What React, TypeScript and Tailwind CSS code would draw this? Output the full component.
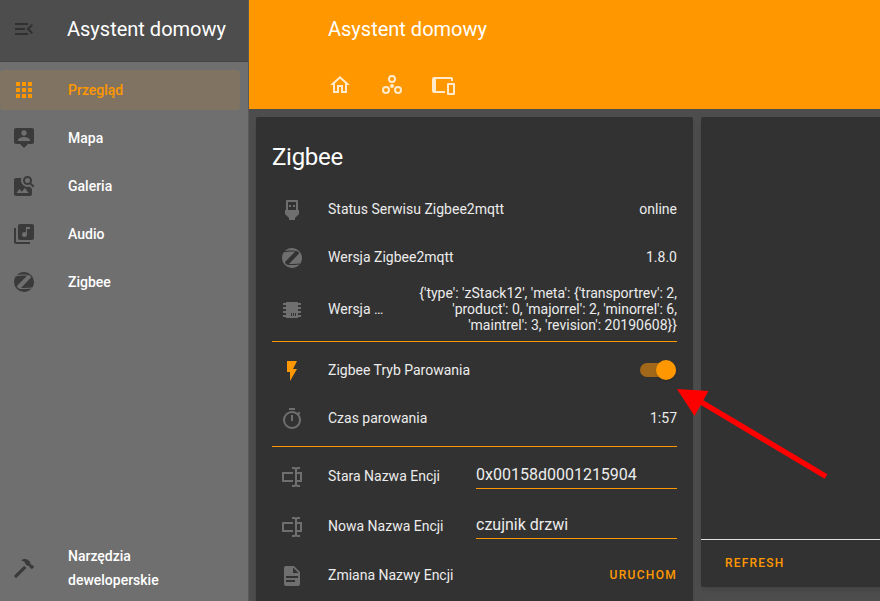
import type { ReactNode } from "react";

type IconName = keyof typeof icons;

const icons = {
  menuOpen: "M21,15.61L19.59,17L14.58,12L19.59,7L21,8.39L17.44,12L21,15.61M3,6H16V8H3V6M3,13V11H13V13H3M3,18V16H16V18H3Z",
  apps: "M16,20H20V16H16M16,14H20V10H16M10,8H14V4H10M16,8H20V4H16M10,14H14V10H10M4,14H8V10H4M4,20H8V16H4M10,20H14V16H10M4,8H8V4H4V8Z",
  account: "M20,2A2,2 0 0,1 22,4V16A2,2 0 0,1 20,18H16L12,22L8,18H4A2,2 0 0,1 2,16V4C2,2.89 2.9,2 4,2H20M12,4.3C10.5,4.3 9.3,5.5 9.3,7C9.3,8.5 10.5,9.7 12,9.7C13.5,9.7 14.7,8.5 14.7,7C14.7,5.5 13.5,4.3 12,4.3M18,15V14.1C18,12.1 14,11 12,11C10,11 6,12.1 6,14.1V15H18Z",
  imageSearch: "M15.5,2A4.5,4.5 0 0,0 11,6.5A4.5,4.5 0 0,0 15.5,11C16.38,11 17.2,10.75 17.9,10.31L21,13.41L22.41,12L19.31,8.91C19.75,8.2 20,7.38 20,6.5A4.5,4.5 0 0,0 15.5,2M15.5,4A2.5,2.5 0 0,1 18,6.5A2.5,2.5 0 0,1 15.5,9A2.5,2.5 0 0,1 13,6.5A2.5,2.5 0 0,1 15.5,4M4,4A2,2 0 0,0 2,6V20A2,2 0 0,0 4,22H18A2,2 0 0,0 20,20V15L17.6,12.5A6.5,6.5 0 0,1 9.5,4H4M13,14L16.5,19H4.5L7.5,15L9.7,17.8L13,14Z",
  music: "M4,6H2V20A2,2 0 0,0 4,22H18V20H4M18,7H15V12.5A2.5,2.5 0 0,1 12.5,15A2.5,2.5 0 0,1 10,12.5A2.5,2.5 0 0,1 12.5,10C13.07,10 13.58,10.19 14,10.5V5H18M20,2H8A2,2 0 0,0 6,4V16A2,2 0 0,0 8,18H20A2,2 0 0,0 22,16V4A2,2 0 0,0 20,2Z",
  zigbee: "M4.06,6.15C3.97,6.17 3.88,6.22 3.8,6.28C2.66,7.9 2,9.87 2,12A10,10 0 0,0 12,22C15,22 17.68,20.68 19.5,18.6L17,18.85C14.25,19.15 11.45,19.19 8.66,18.96C7.95,18.94 7.24,18.76 6.59,18.45C5.73,18.06 5.15,17.23 5.07,16.29C5.06,16.13 5.12,16 5.23,15.87L7.42,13.6L15.03,5.7V5.6H10.84C8.57,5.64 6.31,5.82 4.06,6.15M20.17,17.5C20.26,17.47 20.35,17.44 20.43,17.39C21.42,15.83 22,14 22,12A10,10 0 0,0 12,2C9.22,2 6.7,3.13 4.89,4.97H5.17C8.28,4.57 11.43,4.47 14.56,4.65C15.5,4.64 16.45,4.82 17.33,5.17C18.25,5.53 18.89,6.38 19,7.37C19,7.53 18.93,7.7 18.82,7.82L9.71,17.19L9,17.95V18.06H13.14C15.5,18 17.84,17.81 20.17,17.5Z",
  hammer: "M2.3,19.6L12.2,9.7L14.4,11.9L4.5,21.8C3.6,22.3 1.8,20.6 2.3,19.6M9.2,4.4C11.2,2.6 14.4,2.5 16.4,4.2L18.2,6L18.3,8.2L20,8.7L22.2,10.9L19.8,13.3L17.6,11.2L17.2,9.8L15.6,10.1L13.2,7.7C13.2,6 11.8,4.8 9.2,4.4Z",
  home: "M12,5.69L17,10.19V18H15V12H9V18H7V10.19L12,5.69M12,3L2,12H5V20H11V14H13V20H19V12H22L12,3Z",
  circles: "M12,2A4,4 0 0,0 8,6A4,4 0 0,0 12,10A4,4 0 0,0 16,6A4,4 0 0,0 12,2M12,4A2,2 0 0,1 14,6A2,2 0 0,1 12,8A2,2 0 0,1 10,6A2,2 0 0,1 12,4M6,13A4,4 0 0,0 2,17A4,4 0 0,0 6,21A4,4 0 0,0 10,17A4,4 0 0,0 6,13M6,15A2,2 0 0,1 8,17A2,2 0 0,1 6,19A2,2 0 0,1 4,17A2,2 0 0,1 6,15M18,13A4,4 0 0,0 14,17A4,4 0 0,0 18,21A4,4 0 0,0 22,17A4,4 0 0,0 18,13M18,15A2,2 0 0,1 20,17A2,2 0 0,1 18,19A2,2 0 0,1 16,17A2,2 0 0,1 18,15M12,11A2,2 0 0,0 10,13A2,2 0 0,0 12,15A2,2 0 0,0 14,13A2,2 0 0,0 12,11Z",
  devices: "M2,4H19A2,2 0 0,1 21,6V8H19V6H4V18H13V20H2A2,2 0 0,1 0,18V6A2,2 0 0,1 2,4M16,10H22A1,1 0 0,1 23,11V21A1,1 0 0,1 22,22H16A1,1 0 0,1 15,21V11A1,1 0 0,1 16,10M17,12V20H21V12H17Z",
  usb: "M7,2H17A1,1 0 0,1 18,3V12H19V16L15,20V22H9V20L5,16V12H6V3A1,1 0 0,1 7,2M8,4V12H16V4H8M9,7H11V9H9V7M13,7H15V9H13V7Z",
  chip: "M6,4H18V5H21V7H18V9H21V11H18V13H21V15H18V17H21V19H18V20H6V19H3V17H6V15H3V13H6V11H3V9H6V7H3V5H6V4M11,15V18H12V15H11M13,15V18H14V15H13M15,15V18H16V15H15Z",
  flash: "M7,2V13H10V22L17,10H13L17,2H7Z",
  timer: "M12,20A7,7 0 0,1 5,13A7,7 0 0,1 12,6A7,7 0 0,1 19,13A7,7 0 0,1 12,20M19.03,7.39L20.45,5.97C20,5.46 19.55,5 19.04,4.56L17.62,6C16.07,4.74 14.12,4 12,4A9,9 0 0,0 3,13A9,9 0 0,0 12,22C17,22 21,17.97 21,13C21,10.88 20.26,8.93 19.03,7.39M11,14H13V8H11M15,1H9V3H15V1Z",
  textbox: "M17,7H22V17H17V19A1,1 0 0,0 18,20H20V22H17.5C16.95,22 16,21.55 16,21C16,21.55 15.05,22 14.5,22H12V20H14A1,1 0 0,0 15,19V5A1,1 0 0,0 14,4H12V2H14.5C15.05,2 16,2.45 16,3C16,2.45 16.95,2 17.5,2H20V4H18A1,1 0 0,0 17,5V7M2,7H13V9H4V15H13V17H2V7M20,15V9H17V15H20Z",
  document: "M13,9H18.5L13,3.5V9M6,2H14L20,8V20A2,2 0 0,1 18,22H6C4.89,22 4,21.1 4,20V4C4,2.89 4.89,2 6,2M15,18V16H6V18H15M18,14V12H6V14H18Z",
};

function Icon({ name, className = "" }: { name: IconName; className?: string }) {
  return (
    <svg viewBox="0 0 24 24" className={`size-6 shrink-0 fill-current ${className}`}>
      <path d={icons[name]} fillRule={name === "chip" ? "evenodd" : "nonzero"} />
    </svg>
  );
}

function NavItem({ icon, label, active = false }: { icon: IconName; label: string; active?: boolean }) {
  return (
    <a className={`flex h-10 w-60 items-center gap-8 rounded pl-3 font-medium ${active ? "bg-[#ff9800]/12 text-[#ff9800]" : "text-white"}`}>
      <Icon name={icon} className={active ? "" : "text-[#3a3a3a]"} />
      <span>{label}</span>
    </a>
  );
}

function Row({ icon, label, active, className = "h-10", children }: { icon: IconName; label: string; active?: boolean; className?: string; children: ReactNode }) {
  return (
    <div className={`flex items-center justify-between ${className}`}>
      <div className="flex shrink-0 items-center pl-2">
        <Icon name={icon} className={`translate-y-px ${active ? "text-[#ff9800]" : "text-[#6f6f6f]"}`} />
        <span className="ml-6 whitespace-nowrap">{label}</span>
      </div>
      {children}
    </div>
  );
}

function Field({ value }: { value: string }) {
  return <div className="mb-2 h-[34px] w-[201px] border-b border-[#ff9800] pt-2 text-base leading-6">{value}</div>;
}

export default function App() {
  return (
    <div className="relative flex h-[601px] w-[880px] overflow-hidden bg-[#4d4d4d] font-[Roboto,sans-serif] text-sm leading-5 text-[#ececec]">
      <aside className="flex w-[249px] shrink-0 flex-col border-r border-[#5a5a5a] bg-[#6f6f6f]">
        <div className="flex h-[62px] items-center border-b border-[#444] bg-[#4d4d4d] pb-[3px] pl-3">
          <Icon name="menuOpen" className="text-[#303030]" />
          <span className="ml-[31px] text-xl text-white">Asystent domowy</span>
        </div>
        <nav className="flex grow flex-col gap-2 pt-2">
          <NavItem icon="apps" label="Przegląd" active />
          <NavItem icon="account" label="Mapa" />
          <NavItem icon="imageSearch" label="Galeria" />
          <NavItem icon="music" label="Audio" />
          <NavItem icon="zigbee" label="Zigbee" />
        </nav>
        <div className="flex items-center gap-8 pb-[9px] pl-3 font-medium leading-6 text-white">
          <Icon name="hammer" className="text-[#3a3a3a]" />
          <span className="w-28">Narzędzia deweloperskie</span>
        </div>
      </aside>

      <div className="flex min-w-0 grow flex-col">
        <header className="h-[109px] shrink-0 bg-[#ff9800] pl-[79px] text-white">
          <div className="flex h-[73px] pt-[15px] text-xl leading-7">Asystent domowy</div>
          <nav className="flex gap-7 text-white/80">
            <Icon name="home" />
            <Icon name="circles" />
            <Icon name="devices" />
          </nav>
        </header>

        <main className="flex items-start gap-2 pl-[7px] pt-2">
          <section className="w-[437px] shrink-0 rounded-xs bg-[#323232] px-4 pb-4 shadow-md">
            <h1 className="h-[72px] pt-6 text-2xl leading-8 tracking-[-0.012em] text-white">Zigbee</h1>
            <div className="flex flex-col gap-2">
              <Row icon="usb" label="Status Serwisu Zigbee2mqtt">online</Row>
              <Row icon="zigbee" label="Wersja Zigbee2mqtt">1.8.0</Row>
              <Row icon="chip" label="Wersja …" className="h-12">
                <p className="text-right leading-4 whitespace-nowrap">
                  {"{'type': 'zStack12', 'meta': {'transportrev': 2,"}
                  <br />
                  {"'product': 0, 'majorrel': 2, 'minorrel': 6,"}
                  <br />
                  {"'maintrel': 3, 'revision': 20190608}}"}
                </p>
              </Row>
              <hr className="border-[#ff9800]" />
              <Row icon="flash" label="Zigbee Tryb Parowania" active>
                <div className="mr-px flex h-[14px] w-9 items-center justify-end rounded-full bg-[#a16819]">
                  <div className="size-5 shrink-0 rounded-full bg-[#ff9800] shadow" />
                </div>
              </Row>
              <Row icon="timer" label="Czas parowania">1:57</Row>
              <hr className="border-[#ff9800]" />
              <Row icon="textbox" label="Stara Nazwa Encji" className="h-[42px]">
                <Field value="0x00158d0001215904" />
              </Row>
              <Row icon="textbox" label="Nowa Nazwa Encji" className="h-[42px]">
                <Field value="czujnik drzwi" />
              </Row>
              <Row icon="document" label="Zmiana Nazwy Encji">
                <button className="text-xs font-medium tracking-[1.3px] text-[#ff9800]">URUCHOM</button>
              </Row>
            </div>
          </section>

          <section className="flex h-[470px] w-[437px] shrink-0 flex-col justify-end rounded-xs bg-[#323232] shadow-md">
            <div className="h-12 border-t border-[#e1e1e1] pl-6 pt-3">
              <button className="text-xs font-medium tracking-[1.2px] text-[#ff9800]">REFRESH</button>
            </div>
          </section>
        </main>
      </div>

      <svg viewBox="0 0 152 92" className="absolute left-[676px] top-[388px] h-[92px] w-[152px]">
        <path d="M20 11 150 88.5" stroke="#f00" strokeWidth="5.5" />
        <path d="M1 1 32.5 3 18.5 28Z" fill="#f00" />
      </svg>
    </div>
  );
}
